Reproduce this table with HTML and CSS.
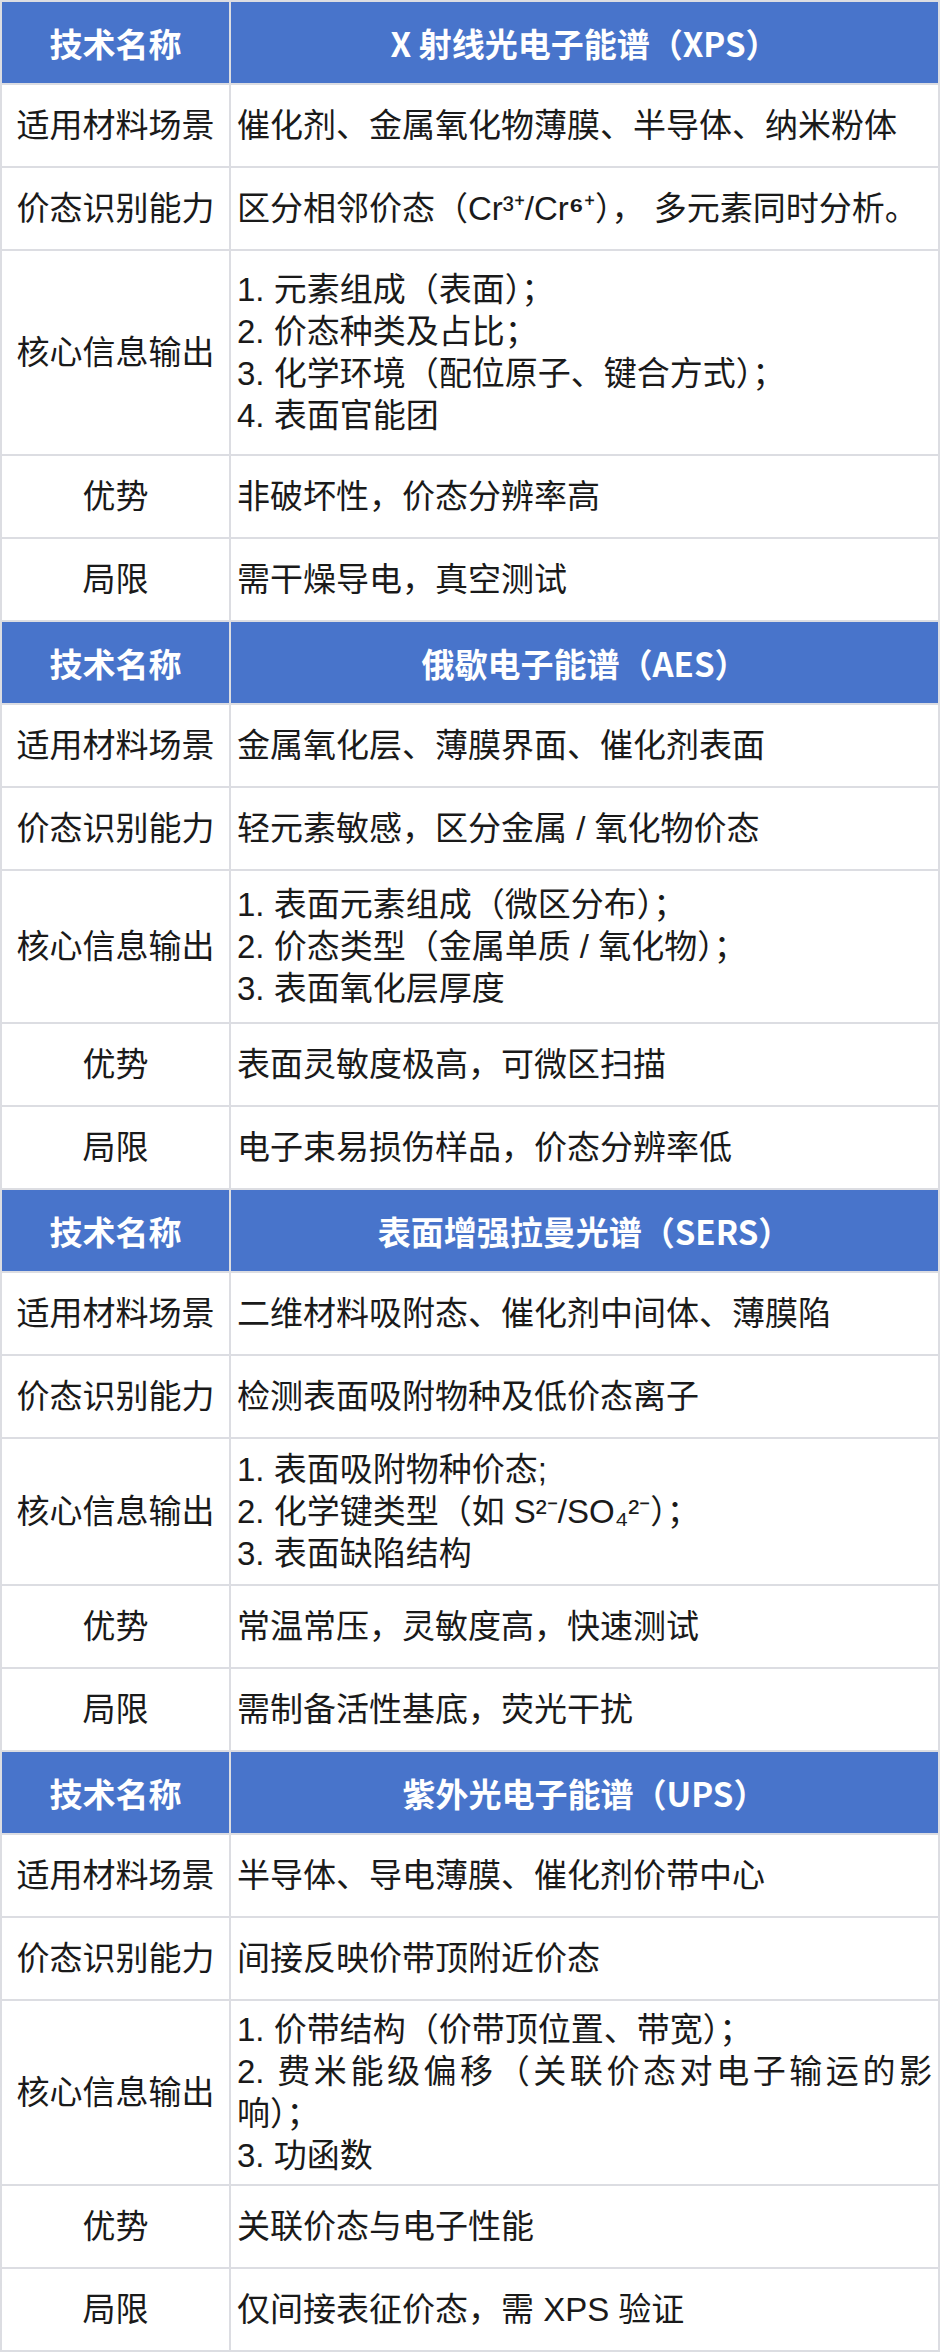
FILE: index.html
```html
<!DOCTYPE html>
<html lang="zh-CN">
<head>
<meta charset="utf-8">
<title>表面价态表征技术对比</title>
<link rel="stylesheet" href="styles.css">
</head>
<body>
<div class="table">
  <div class="row head">
    <div class="cell label">技术名称</div>
    <div class="cell value center"><div class="text">X 射线光电子能谱（XPS）</div></div>
  </div>
  <div class="row">
    <div class="cell label">适用材料场景</div>
    <div class="cell value"><div class="text">催化剂、金属氧化物薄膜、半导体、纳米粉体</div></div>
  </div>
  <div class="row">
    <div class="cell label">价态识别能力</div>
    <div class="cell value"><div class="text">区分相邻价态（Cr³⁺/Cr<span class="sup-bold">⁶</span>⁺）， 多元素同时分析。</div></div>
  </div>
  <div class="row core-xps">
    <div class="cell label">核心信息输出</div>
    <div class="cell value"><div class="text">
      <div>1. 元素组成（表面）；</div>
      <div>2. 价态种类及占比；</div>
      <div>3. 化学环境（配位原子、键合方式）；</div>
      <div>4. 表面官能团</div>
    </div></div>
  </div>
  <div class="row">
    <div class="cell label">优势</div>
    <div class="cell value"><div class="text">非破坏性，价态分辨率高</div></div>
  </div>
  <div class="row">
    <div class="cell label">局限</div>
    <div class="cell value"><div class="text">需干燥导电，真空测试</div></div>
  </div>

  <div class="row head">
    <div class="cell label">技术名称</div>
    <div class="cell value center"><div class="text">俄歇电子能谱（AES）</div></div>
  </div>
  <div class="row">
    <div class="cell label">适用材料场景</div>
    <div class="cell value"><div class="text">金属氧化层、薄膜界面、催化剂表面</div></div>
  </div>
  <div class="row">
    <div class="cell label">价态识别能力</div>
    <div class="cell value"><div class="text">轻元素敏感，区分金属 / 氧化物价态</div></div>
  </div>
  <div class="row core-aes">
    <div class="cell label">核心信息输出</div>
    <div class="cell value"><div class="text">
      <div>1. 表面元素组成（微区分布）；</div>
      <div>2. 价态类型（金属单质 / 氧化物）；</div>
      <div>3. 表面氧化层厚度</div>
    </div></div>
  </div>
  <div class="row">
    <div class="cell label">优势</div>
    <div class="cell value"><div class="text">表面灵敏度极高，可微区扫描</div></div>
  </div>
  <div class="row">
    <div class="cell label">局限</div>
    <div class="cell value"><div class="text">电子束易损伤样品，价态分辨率低</div></div>
  </div>

  <div class="row head">
    <div class="cell label">技术名称</div>
    <div class="cell value center"><div class="text">表面增强拉曼光谱（SERS）</div></div>
  </div>
  <div class="row">
    <div class="cell label">适用材料场景</div>
    <div class="cell value"><div class="text">二维材料吸附态、催化剂中间体、薄膜陷</div></div>
  </div>
  <div class="row">
    <div class="cell label">价态识别能力</div>
    <div class="cell value"><div class="text">检测表面吸附物种及低价态离子</div></div>
  </div>
  <div class="row core-sers">
    <div class="cell label">核心信息输出</div>
    <div class="cell value"><div class="text">
      <div>1. 表面吸附物种价态;</div>
      <div>2. 化学键类型（如 S²⁻/SO₄²⁻）；</div>
      <div>3. 表面缺陷结构</div>
    </div></div>
  </div>
  <div class="row">
    <div class="cell label">优势</div>
    <div class="cell value"><div class="text">常温常压，灵敏度高，快速测试</div></div>
  </div>
  <div class="row">
    <div class="cell label">局限</div>
    <div class="cell value"><div class="text">需制备活性基底，荧光干扰</div></div>
  </div>

  <div class="row head">
    <div class="cell label">技术名称</div>
    <div class="cell value center"><div class="text">紫外光电子能谱（UPS）</div></div>
  </div>
  <div class="row">
    <div class="cell label">适用材料场景</div>
    <div class="cell value"><div class="text">半导体、导电薄膜、催化剂价带中心</div></div>
  </div>
  <div class="row">
    <div class="cell label">价态识别能力</div>
    <div class="cell value"><div class="text">间接反映价带顶附近价态</div></div>
  </div>
  <div class="row core-ups">
    <div class="cell label">核心信息输出</div>
    <div class="cell value"><div class="text">
      <div>1. 价带结构（价带顶位置、带宽）；</div>
      <div>2. 费米能级偏移（关联价态对电子输运的影响）；</div>
      <div>3. 功函数</div>
    </div></div>
  </div>
  <div class="row">
    <div class="cell label">优势</div>
    <div class="cell value"><div class="text">关联价态与电子性能</div></div>
  </div>
  <div class="row">
    <div class="cell label">局限</div>
    <div class="cell value"><div class="text">仅间接表征价态，需 XPS 验证</div></div>
  </div>
</div>
</body>
</html>
```

FILE: styles.css
```css
html, body {
  margin: 0;
  padding: 0;
  background: #ffffff;
}

.table {
  width: 940px;
  box-sizing: border-box;
  border-top: 2px solid #dcdde2;
  border-left: 2px solid #dcdde2;
  border-right: 2px solid #dcdde2;
  font-family: "Liberation Sans", "Noto Sans CJK SC", sans-serif;
  font-size: 33px;
  line-height: 42px;
  color: #1a1a1a;
}

.row {
  display: grid;
  grid-template-columns: 229px 1fr;
  height: 83px;
  box-sizing: border-box;
  border-bottom: 2px solid #dcdde2;
}

.row.core-xps { height: 205px; }
.row.core-aes { height: 153px; }
.row.core-sers { height: 147px; }
.row.core-ups { height: 185px; }

.cell {
  display: flex;
  align-items: center;
  padding: 0 6px;
  min-width: 0;
}

.cell.label {
  justify-content: center;
  text-align: center;
  border-right: 2px solid #dcdde2;
  white-space: nowrap;
}

.cell.value .text {
  width: 100%;
  text-align: justify;
}

.cell.value.center {
  justify-content: center;
}

.cell.value.center .text {
  text-align: center;
}

.sup-bold {
  font-weight: 700;
}

.row.head {
  background: #4874cb;
  color: #ffffff;
  font-family: "Noto Sans CJK SC", sans-serif;
  font-weight: 700;
}
```
